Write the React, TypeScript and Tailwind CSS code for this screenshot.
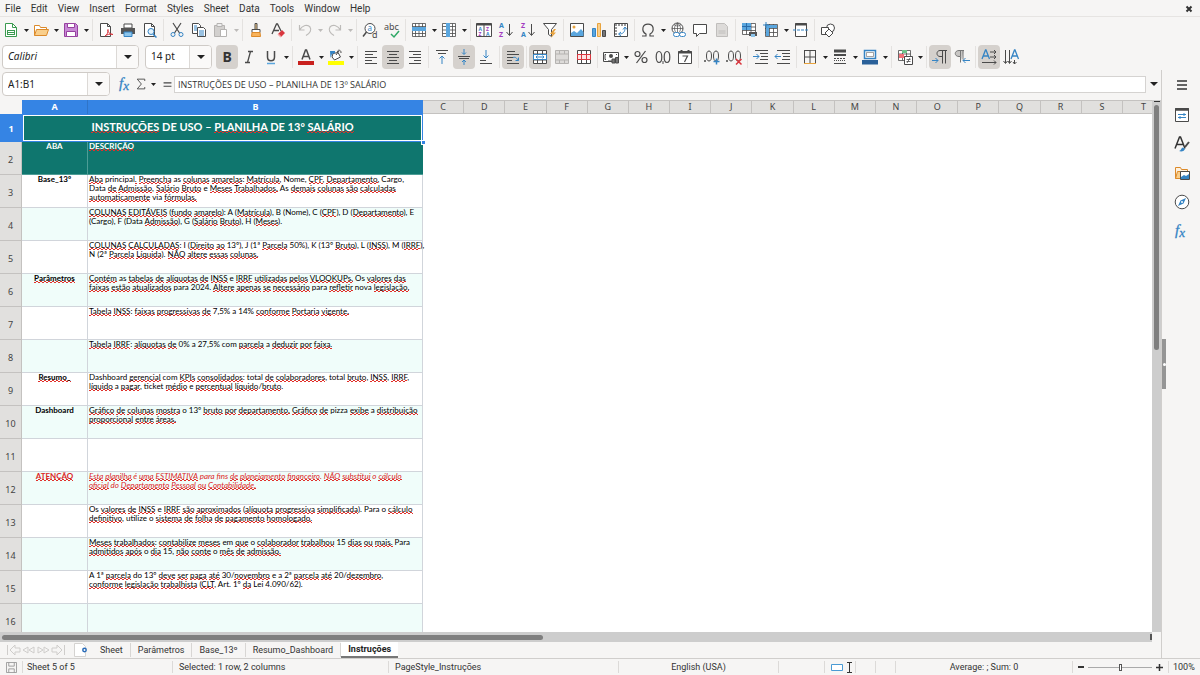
import type { ReactNode } from "react";
import { clsx } from "clsx";

const K = "#4a4a4a";
const B = "#3584c4";
const O = "#e8a33d";
const R = "#d9363e";

const icons: Record<string, ReactNode> = {
    "New": <><path d="M2.500 1.500h7l4 4v9h-11z" fill="#fff" stroke="#3a9a4f" /><path d="M9.500 1.500v4h4" fill="none" stroke="#3a9a4f" /><path d="M4 8h8v5H4z" fill="#3a9a4f" /><path d="M5 9.500h6M5 11.500h6" stroke="#fff" /></>,
    "Open": <><path d="M1.500 13.500v-10h5l1 2h6v2" fill="#fff" stroke="#dc8a2a" /><path d="M1.500 13.500l2-6h12l-2 6z" fill="#f9cf8c" stroke="#dc8a2a" /></>,
    "Save": <><path d="M1.500 1.500h11l2 2v11h-13z" fill="#c88ad6" stroke="#97419f" /><path d="M4.500 1.500h7v4h-7zM3.500 9.500h9v5h-9z" fill="#fff" stroke="#97419f" /></>,
    "Export as PDF": <><path d="M2.500 1.500h7l3 3v10h-10z" fill="#fff" stroke={K} /><path d="M9.500 1.500v3h3" fill="none" stroke={K} /><path d="M7 14c2-1 3.500-4 3-6.500-1 2 1.500 4.500 5 5-3-1-6 0-8 1.500z" fill="none" stroke={R} /></>,
    "Print": <><path d="M4 2h8v4H4z" fill="#fff" stroke={K} /><path d="M1 6h14v6H1z" fill="#555" /><path d="M4 10h8v4.500H4z" fill="#8cc4ea" stroke={B} /></>,
    "Print Preview": <><path d="M2.500 1.500h7l3 3v10h-10z" fill="#fff" stroke={K} /><path d="M9.500 1.500v3h3" fill="none" stroke={K} /><circle cx="9" cy="9.500" r="3" fill="#e4f2fb" stroke={B} /><path d="M11 12l3.500 3.500" stroke={B} strokeWidth="1.500" /></>,
    "Cut": <><path d="M4 1l6.500 10M12 1L5.500 11" stroke={K} strokeWidth="1.200" /><circle cx="4" cy="12.500" r="2" fill="none" stroke={B} /><circle cx="12" cy="12.500" r="2" fill="none" stroke={B} /></>,
    "Copy": <><path d="M1.500 1.500h6l2 2v8h-8z" fill="#fff" stroke={K} /><path d="M6.500 5.500h6l2 2v7h-8z" fill="#fff" stroke={K} /><path d="M3 4h3M3 6h3M3 8h3M8 9h5M8 11h5M8 13h5" stroke={B} /></>,
    "Paste": <><path d="M1.500 3.500h10v11h-10z" fill="#d2d0ce" stroke="#b5b3b1" /><path d="M4 1.500h5v3H4z" fill="#eee" stroke="#b5b3b1" /><path d="M7.500 7.500h6v7h-6z" fill="#fff" stroke="#b5b3b1" /></>,
    "Clone Formatting": <><path d="M7 1.500h2v6H7z" fill="#f9cf8c" stroke={K} /><path d="M4 7.500h8v3H4z" fill="#fff" stroke={K} /><path d="M4 10.500h8l.500 4h-9z" fill="#f9b35b" stroke="#dc8a2a" /></>,
    "Clear Formatting": <><path d="M2 12L6.500 2h1L11 9M4 8.500h5" fill="none" stroke={K} strokeWidth="1.300" /><path d="M8 12l4-4 3 3-4 4z" fill={R} /><path d="M7.500 12.500l1-1 3 3-1 1z" fill="#f4a6a8" /></>,
    "Undo": <path d="M2.500 3v5h5M2.500 8c3-5 8-6 10.500-3 2 3 0 6-4 8.500" fill="none" stroke="#bdbbb9" strokeWidth="1.200" />,
    "Redo": <path d="M13.500 3v5h-5M13.500 8c-3-5-8-6-10.500-3-2 3 0 6 4 8.500" fill="none" stroke="#bdbbb9" strokeWidth="1.200" />,
    "Find and Replace": <><circle cx="8" cy="6.500" r="5" fill="#fff" stroke={K} /><path d="M4.500 10L1 14.500" stroke={K} strokeWidth="1.500" /><text x="5.500" y="9" fontSize="8" fill={B}>a</text><text x="10" y="15.500" fontSize="9" fill={K}>d</text></>,
    "Spelling": <><text x="0" y="8" fontSize="9" fill={K}>abc</text><path d="M7 12l3 3 5-6" fill="none" stroke="#2fa866" strokeWidth="1.500" /></>,
    "Row": <><path d="M1.500 1.500h13v13h-13zM1.500 11.500h13M1.500 4.500h13M4.500 1.500v13M8 1.500v13M11.500 1.500v13" fill="#fff" stroke={K} strokeWidth=".800" /><path d="M1 5h14v4H1z" fill="#5aa6de" /></>,
    "Column": <><path d="M1.500 1.500h13v13h-13zM1.500 4.500h13M1.500 8h13M1.500 11.500h13M11.500 1.500v13" fill="#fff" stroke={K} strokeWidth=".800" /><path d="M5 1h4v14H5z" fill="#5aa6de" /></>,
    "Sort": <><path d="M.500 1.500h15v13H.500zM8 1.500v13" fill="#fff" stroke={K} /><path d="M.500 2.500h15" stroke={K} strokeWidth="2" /><g fontSize="5" fontWeight="700"><text x="2.500" y="8.500" fill={B}>A</text><text x="2.500" y="14" fill="#a23ac0">Z</text><text x="10" y="8.500" fill="#a23ac0">Z</text><text x="10" y="14" fill={B}>A</text></g></>,
    "Sort Ascending": <><text x="1" y="6" fontSize="7" fontWeight="700" fill={B}>A</text><text x="1" y="15" fontSize="7" fontWeight="700" fill="#a23ac0">Z</text><path d="M11.500 2v11M8.500 10l3 3.500 3-3.500" fill="none" stroke={K} /></>,
    "Sort Descending": <><text x="1" y="6" fontSize="7" fontWeight="700" fill="#a23ac0">Z</text><text x="1" y="15" fontSize="7" fontWeight="700" fill={B}>A</text><path d="M11.500 2v11M8.500 10l3 3.500 3-3.500" fill="none" stroke={K} /></>,
    "AutoFilter": <><path d="M1.500 1.500h13l-5 6v7l-3-2v-5z" fill="#fff" stroke={K} /><path d="M12 7l-4 5h2.500L9 16l5-5.500h-2.500L14 7z" fill={O} /></>,
    "Insert Image": <><path d="M1.500 1.500h13v13h-13z" fill="#fff" stroke={K} /><path d="M2 14V11l3-2 3 2 4-4 2.500 3v4z" fill="#5aa6de" /><circle cx="5" cy="5" r="1.500" fill={O} /></>,
    "Insert Chart": <><path d="M1.500 6.500h3v8h-3z" fill="#5aa6de" stroke={B} /><path d="M6.500 1.500h3v13h-3z" fill="#f9cf8c" stroke={O} /><path d="M11.500 8.500h3v6h-3z" fill="#777" stroke={K} /></>,
    "Pivot Table": <><path d="M1.500 1.500h13v13h-13z" fill="#fff" stroke={K} /><path d="M2 3h12M3 2v12" stroke="#999" strokeWidth="2" strokeDasharray="2 1" /><path d="M6 12c4 0 6-2 6-6M10 7.500L12 5l2 2.500M8 10l-2.500 2L8 14" fill="none" stroke={B} /></>,
    "Special Character": <path d="M2 14h4v-2C3 10.500 2.500 8 3 5.500 4 1 12 1 13 5.500c.500 2.500 0 5-3 6.500v2h4" fill="none" stroke={K} strokeWidth="1.200" />,
    "Insert Hyperlink": <><circle cx="7.500" cy="6.500" r="5.500" fill="#fff" stroke={K} /><path d="M2 6.500h11M7.500 1v11M4 2.500c3 2 4 2 7 0M7.500 1c-4 3-4 8 0 11M7.500 1c4 3 4 8 0 11" fill="none" stroke={K} strokeWidth=".700" /><rect x="3.500" y="10.500" width="6" height="4" rx="2" fill="#fff" stroke={B} /><rect x="9.500" y="10.500" width="6" height="4" rx="2" fill="#fff" stroke={B} /></>,
    "Insert Comment": <path d="M1.500 2.500h13v9H7.500l-3 3v-3h-3z" fill="#fff" stroke={K} />,
    "Headers and Footers": <><path d="M2.500 1.500h8l3 3v10h-11z" fill="#dddbd9" stroke="#c0bebc" /><path d="M4.500 9h7M4.500 11h7" stroke="#c0bebc" /></>,
    "Define Print Area": <><path d="M1.500 1.500h13v11h-13zM1.500 5h13M1.500 8.500h13M5.500 1.500v11M10 1.500v11" fill="#fff" stroke={K} strokeWidth=".800" /><path d="M1 1h9v7H1z" fill="#5aa6de" /><path d="M1 4.500h9M5.500 1v7" stroke="#2a6ca8" /><path d="M8 10h8v4H8z" fill="#555" /><path d="M10 12h4v3h-4z" fill="#8cc4ea" /></>,
    "Freeze Rows and Columns": <><path d="M2.500 2.500h12v12h-12zM6.500 2v12M10.500 2v12M2 6.500h12M2 10.500h12" fill="#fff" stroke={K} strokeWidth=".800" /><path d="M3 3h11v3H3zM3 3h3v11H3z" fill="#5aa6de" /><path d="M3 0v6M0 3h6" stroke={B} /></>,
    "Split Window": <><path d="M2.500 1.500h11v13h-11z" fill="#fff" stroke={K} /><path d="M2 2.500h12" stroke={K} strokeWidth="2" /><path d="M0 8h16" stroke={B} strokeDasharray="3 1" /></>,
    "Show Draw Functions": <><circle cx="10.500" cy="6" r="4" fill="#fff" stroke={K} /><path d="M1.500 5.500h7v7h-7z" fill="#fff" stroke={K} /><path d="M9 7l4 4-4 4-4-4z" fill="#fff" stroke={K} /></>,
    "Bold": <text x="3.500" y="13" fontSize="14" fontWeight="700" fill="#333">B</text>,
    "Italic": <path d="M7 2.500h5M4 13.500h5M9.500 2.500l-3 11" fill="none" stroke={K} strokeWidth="1.300" />,
    "Underline": <><path d="M4.500 2v6c0 5 7 5 7 0V2" fill="none" stroke={K} strokeWidth="1.500" /><path d="M4 14.500h8" stroke="#5aa6de" strokeWidth="1.500" /></>,
    "Font Color": <><path d="M4 10.500L7.500 1h1L12 10.500M5.300 7.500h5.500" fill="none" stroke={K} strokeWidth="1.500" /><path d="M0 12h16v4H0z" fill="#c9211e" /></>,
    "Background Color": <><path d="M5 4.500l5-1 2.500 4.500-6 3-2.500-3z" fill="#fff" stroke={K} /><path d="M2 2h5v2L4 5 2.500 9z" fill={B} /><path d="M9.500 3c0-3 4-2 3.500 1M11 2l-3 4" fill="none" stroke={K} /><path d="M0 12h16v4H0z" fill="#ff0" /></>,
    "Align Left": <path d="M2 2.500h12M2 5.500h8M2 8.500h12M2 11.500h7M2 14.500h12" stroke={K} />,
    "Align Center": <path d="M2 2.500h12M4 5.500h8M2 8.500h12M4 11.500h8M2 14.500h12" stroke={K} />,
    "Align Right": <path d="M2 2.500h12M6 5.500h8M2 8.500h12M7 11.500h7M2 14.500h12" stroke={K} />,
    "Align Top": <><path d="M2 1.500h12M4 4.500h8" stroke={K} /><path d="M8 15V7M5.500 9.500L8 7l2.500 2.500" fill="none" stroke={B} /></>,
    "Center Vertically": <><path d="M2 7.500h12M3 9.500h10" stroke={K} /><path d="M8 0v5M6 3.500l2 2 2-2M8 16v-5M6 13l2-2 2 2" fill="none" stroke={B} /></>,
    "Align Bottom": <><path d="M2 11.500h6M2 14.500h12" stroke={K} /><path d="M8 1v8M5.500 6.500L8 9l2.500-2.500" fill="none" stroke={B} /></>,
    "Wrap Text": <><path d="M2 2.500h8M2 5.500h12M2 8.500h6M2 11.500h5M2 14.500h12" stroke={K} /><path d="M8 8.500c3-1 4 1 5 3M10.500 11.500h3v-3" fill="none" stroke={B} /></>,
    "Merge and Center Cells": <><path d="M1.500 1.500h13v13h-13zM1.500 5h13M1.500 11h13M5.500 1.500V5M10.500 1.500V5M5.500 11v3.500M10.500 11v3.500" fill="#fff" stroke={K} /><path d="M1.500 5.500h13v5h-13z" fill="#fff" stroke={B} /><path d="M4 8h8M5.500 6.500L4 8l1.500 1.500M10.500 6.500L12 8l-1.500 1.500" fill="none" stroke={B} /></>,
    "Merge Cells": <path d="M1.500 1.500h13v13h-13zM1.500 5h13M1.500 11h13M5.500 1.500V5M10.500 1.500V5M5.500 11v3.500M10.500 11v3.500" fill="#dddbd9" stroke="#b5b3b1" />,
    "Unmerge Cells": <><path d="M1.500 1.500h13v13h-13zM5.500 1.500v13M10.500 1.500v13" fill="#fff" stroke={K} /><path d="M1.500 5.500h13v5h-13zM5.500 5.500v5M10.500 5.500v5" fill="#fbe3e3" stroke={R} /></>,
    "Format as Currency": <><path d="M.500 3.500h15v9H.500z" fill="#fff" stroke={K} /><path d="M3 5.500H2v5h1M13 5.500h1" fill="none" stroke={K} /><circle cx="8" cy="7" r="2" fill={K} /><path d="M5 12h4M9 10h3v4H9zM12.500 8.500h3V14h-3z" fill="#777" stroke={K} /></>,
    "Format as Percent": <><circle cx="4.500" cy="5" r="2.500" fill="none" stroke={K} strokeWidth="1.200" /><circle cx="11.500" cy="11" r="2.500" fill="none" stroke={K} strokeWidth="1.200" /><path d="M12.500 2l-9 12" stroke={K} strokeWidth="1.200" /></>,
    "Format as Number": <><ellipse cx="4" cy="8" rx="2.800" ry="5.500" fill="none" stroke={K} strokeWidth="1.200" /><ellipse cx="12" cy="8" rx="2.800" ry="5.500" fill="none" stroke={K} strokeWidth="1.200" /><path d="M8 12v3" stroke={K} /></>,
    "Format as Date": <><path d="M1.500 2.500h13v12h-13z" fill="#fff" stroke={K} /><path d="M1 3.500h14M4.500 1v3M11.500 1v3" stroke={K} strokeWidth="2" /><path d="M5.500 7h5l-3 6" fill="none" stroke={K} strokeWidth="1.200" /></>,
    "Add Decimal Place": <><ellipse cx="5" cy="7" rx="2.500" ry="5" fill="none" stroke={K} /><ellipse cx="12" cy="7" rx="2.500" ry="5" fill="none" stroke={K} /><path d="M1 11v2" stroke={K} strokeWidth="1.500" /><path d="M12.500 9.500v6M9.500 12.500h6" stroke={B} strokeWidth="1.500" /></>,
    "Delete Decimal Place": <><ellipse cx="5" cy="7" rx="2.500" ry="5" fill="none" stroke={K} /><ellipse cx="12" cy="7" rx="2.500" ry="5" fill="none" stroke={K} /><path d="M1 11v2" stroke={K} strokeWidth="1.500" /><path d="M10 10l5.500 5.500M15.500 10L10 15.500" stroke={R} strokeWidth="1.500" /></>,
    "Increase Indent": <><path d="M2 1.500h13M7 4.500h8M8 7.500h7M7 10.500h8M2 14.500h13" stroke={K} /><path d="M0 7.500h6M3.500 5L6 7.500 3.500 10" fill="none" stroke={B} /></>,
    "Decrease Indent": <><path d="M2 1.500h13M7 4.500h8M8 7.500h7M7 10.500h8M2 14.500h13" stroke={K} /><path d="M0 7.500h6M2.500 5L0 7.500 2.500 10" fill="none" stroke={B} /></>,
    "Borders": <><path d="M2 1.500h12M2 8h12M2.500 1v13M8 1v13M13.500 1v13" stroke={K} /><path d="M2 14.500h12" stroke={O} /></>,
    "Border Style": <><path d="M2 2h12" stroke={K} strokeWidth="3" /><path d="M2 6h12" stroke={K} strokeWidth="2" /><path d="M2 9.500h12" stroke={K} strokeDasharray="2 1" /><path d="M2 11.500h12" stroke={K} strokeDasharray="1 1" /><path d="M2 14.500h12" stroke={K} /></>,
    "Border Color": <><path d="M2.500 1.500h11v8h-11z" fill="#fff" stroke={B} strokeWidth="1.500" /><path d="M4.500 3.500h7v4h-7z" fill="#fff" stroke={K} strokeWidth=".500" /><path d="M0 11h16v4.500H0z" fill="#2a6099" /></>,
    "Conditional": <><path d="M1.500 1.500h12v10h-12zM1.500 5h12M1.500 8h12M5.500 1.500v10M9.500 1.500v10" fill="#fff" stroke={K} strokeWidth=".800" /><path d="M5 1h5v3H5z" fill="#6cc48a" /><path d="M2 5h5v4H2z" fill="#f07178" /><path d="M7.500 7.500h8v8h-8z" fill="#fff" stroke={K} /><path d="M9.500 10.500h4M9.500 12.500h4M13 9l-3 5" stroke={K} strokeWidth=".800" /></>,
    "Left-To-Right": <><path d="M10.500 1.500v13M13.500 1.500v13M15 1.500H8c-4 0-4 6 0 6h2" fill="none" stroke={K} /><path d="M0 11.500h6M3.500 9L6 11.500 3.500 14" fill="none" stroke={B} /></>,
    "Right-To-Left": <><path d="M10 1.500H5c-5 0-5 6 0 6h1.500v6M9 1.500v9M6.500 1.500v6" fill="#c8c6c4" stroke="#777" /><path d="M9 11.500h7M11.500 9L9 11.500l2.500 2.500" fill="none" stroke={B} /></>,
    "Text direction from left to right": <><path d="M1 10L4.500 1h.500L8.500 10M2.200 7h5.200" fill="none" stroke={B} strokeWidth="1.300" /><path d="M9 3h6M9 8h6M1 13.500h14M13 1l2 2-2 2M13 6l2 2-2 2M13 11.500l2 2-2 2" fill="none" stroke={K} /></>,
    "Text direction from top to bottom": <><path d="M8 10L11.500 1h.500L15.500 10M9.200 7h5.200" fill="none" stroke={B} strokeWidth="1.300" /><path d="M2.500 1v13M6.500 1v13M11.500 11v4M.500 12l2 2.500 2-2.500M5 12l1.500 2.500L8.500 12M10 13l1.500 2 2-2" fill="none" stroke={K} /></>,
    "Function Wizard": <text x="1" y="12" fontSize="15" fontStyle="italic" fontFamily="Liberation Serif, serif" fill={B} stroke={B} strokeWidth=".300">f<tspan fontSize="13" dy="2">x</tspan></text>,
    "Select Function": <path d="M13 4V1.500H3L8.500 8 3 14.500h10V12" fill="none" stroke={K} strokeWidth="1.200" />,
    "Formula": <path d="M1 5h14M1 11h14" stroke="#444" strokeWidth="2" />,
    "Sidebar Settings": <path d="M3 4h10M3 8h10M3 12h10" stroke="#333" strokeWidth="1.500" />,
    "Properties": <><path d="M1.500 1.500h13v13h-13z" fill="#fff" stroke={K} /><path d="M1 2.500h14" stroke={K} strokeWidth="2.500" /><path d="M4 7.500h8M4 10.500h8M10 6v3M6 9v3" stroke={B} /></>,
    "Styles": <><path d="M1 12.500L5.500 1h1L11 12.500M2.500 8.500h7" fill="none" stroke="#333" strokeWidth="1.500" /><path d="M15 6l-4 5" stroke={K} strokeWidth="2" /><path d="M5 15c2 0 2-3 4-3.500l2 1.500c-1 2.500-4 3-6 2z" fill={B} /></>,
    "Gallery": <><path d="M1.500 13.500v-11h5l1 2h6v3" fill="#fdf1df" stroke="#dc8a2a" /><path d="M1.500 13.500l2-7h12l-1 7z" fill="#f9cf8c" stroke="#dc8a2a" /><path d="M6.500 6.500h9v8h-9z" fill="#fff" stroke={K} /><path d="M7 14v-2l3-2 2 1 3-2v5z" fill={B} /></>,
    "Navigator": <><circle cx="8" cy="8" r="6.800" fill="#fff" stroke={K} /><path d="M12 4l-2.500 5.500L4 12l2.500-5.500z" fill={B} /><circle cx="8" cy="8" r="1" fill="#fff" /></>,
    "Close": <path d="M5.500 5.500l5 5M10.500 5.500l-5 5" stroke="#333" strokeWidth="2" />,
};

type Tool = { name: string; menu?: boolean; on?: boolean };

const tool = (name: string, menu = false, on = false): Tool => ({ name, menu, on });

const standardBar: Tool[][] = [
    [tool("New", true), tool("Open", true), tool("Save", true)],
    [tool("Export as PDF"), tool("Print"), tool("Print Preview")],
    [tool("Cut"), tool("Copy"), tool("Paste", true)],
    [tool("Clone Formatting"), tool("Clear Formatting")],
    [tool("Undo", true), tool("Redo", true)],
    [tool("Find and Replace"), tool("Spelling")],
    [tool("Row", true), tool("Column", true)],
    [tool("Sort"), tool("Sort Ascending"), tool("Sort Descending"), tool("AutoFilter")],
    [tool("Insert Image"), tool("Insert Chart"), tool("Pivot Table")],
    [tool("Special Character", true), tool("Insert Hyperlink"), tool("Insert Comment"), tool("Headers and Footers")],
    [tool("Define Print Area"), tool("Freeze Rows and Columns", true), tool("Split Window")],
    [tool("Show Draw Functions")],
];

const formatBar: Tool[][] = [
    [tool("Bold", false, true), tool("Italic"), tool("Underline", true)],
    [tool("Font Color", true), tool("Background Color", true)],
    [tool("Align Left"), tool("Align Center", false, true), tool("Align Right")],
    [tool("Align Top"), tool("Center Vertically", false, true), tool("Align Bottom")],
    [tool("Wrap Text", false, true)],
    [tool("Merge and Center Cells", false, true), tool("Merge Cells"), tool("Unmerge Cells")],
    [tool("Format as Currency", true), tool("Format as Percent"), tool("Format as Number"), tool("Format as Date")],
    [tool("Add Decimal Place"), tool("Delete Decimal Place")],
    [tool("Increase Indent"), tool("Decrease Indent")],
    [tool("Borders", true), tool("Border Style", true), tool("Border Color", true)],
    [tool("Conditional", true)],
    [tool("Left-To-Right", false, true), tool("Right-To-Left")],
    [tool("Text direction from left to right", false, true), tool("Text direction from top to bottom")],
];

const disabled = ["Paste", "Undo", "Redo", "Headers and Footers", "Merge Cells"];
const menus = ["File", "Edit", "View", "Insert", "Format", "Styles", "Sheet", "Data", "Tools", "Window", "Help"];
const columns = "CDEFGHIJKLMNOPQRS".split("");
const sheets = ["Sheet", "Parâmetros", "Base_13º", "Resumo_Dashboard", "Instruções"];
const panels = ["Properties", "Styles", "Gallery", "Navigator", "Function Wizard"];

// words between square brackets get the spell check wave
const rows: { a?: string; b?: string[]; alert?: boolean }[] = [
    { a: "Base_13º", b: ["[Aba] principal[.] [Preencha] as [colunas] [amarelas]: [Matrícula], Nome, [CPF], [Departamento], Cargo,", "Data [de] [Admissão], [Salário] [Bruto] e [Meses] [Trabalhados.] As [demais] [colunas] [são] [calculadas]", "[automaticamente] via [fórmulas.]"] },
    { b: ["[COLUNAS] [EDITÁVEIS] ([fundo] [amarelo]): A ([Matrícula]), B (Nome), C ([CPF]), D ([Departamento]), E", "(Cargo), F (Data [Admissão]), G ([Salário] [Bruto]), H ([Meses])."] },
    { b: ["[COLUNAS] [CALCULADAS]: I ([Direito] [ao] 13º), J (1ª [Parcela] 50%), K (13º [Bruto]), L ([INSS]), M ([IRRF]),", "N (2ª [Parcela] [Líquida]). [NÃO] [altere] [essas] [colunas.]"] },
    { a: "[Parâmetros]", b: ["[Contém] as [tabelas] [de] [alíquotas] [de] [INSS] e [IRRF] [utilizadas] [pelos] [VLOOKUPs.] Os [valores] [das]", "[faixas] [estão] [atualizados] para 2024. [Altere] [apenas] [se] [necessário] para [refletir] nova [legislação.]"] },
    { b: ["[Tabela] [INSS]: [faixas] [progressivas] [de] 7,5% a 14% [conforme] [Portaria] [vigente.]"] },
    { b: ["[Tabela] [IRRF]: [alíquotas] [de] 0% a 27,5% com [parcela] a [deduzir] [por] [faixa.]"] },
    { a: "[Resumo_]", b: ["Dashboard [gerencial] com [KPIs] [consolidados]: total [de] [colaboradores], total [bruto], [INSS], [IRRF],", "[líquido] a [pagar], ticket [médio] e [percentual] [líquido]/[bruto]."] },
    { a: "Dashboard", b: ["[Gráfico] [de] [colunas] [mostra] o 13º [bruto] [por] [departamento.] [Gráfico] [de] pizza [exibe] a [distribuição]", "[proporcional] [entre] [áreas.]"] },
    {},
    { a: "[ATENÇÃO]", alert: true, b: ["[Esta] [planilha] é [uma] [ESTIMATIVA] para fins [de] [planejamento] [financeiro]. [NÃO] [substitui] o [cálculo]", "[oficial] do [Departamento] [Pessoal] [ou] [Contabilidade.]"] },
    { b: ["Os [valores] [de] [INSS] e [IRRF] [são] [aproximados] ([alíquota] [progressiva] [simplificada]). Para o [cálculo]", "[definitivo], utilize o [sistema] [de] [folha] [de] [pagamento] [homologado.]"] },
    { b: ["[Meses] [trabalhados]: [contabilize] [meses] em [que] o [colaborador] [trabalhou] 15 [dias] [ou] [mais.] Para", "[admitidos] [após] o [dia] 15, [não] [conte] o [mês] [de] [admissão.]"] },
    { b: ["A 1ª [parcela] do 13º [deve] [ser] [paga] [até] 30/[novembro] e a 2ª [parcela] [até] 20/[dezembro],", "[conforme] [legislação] [trabalhista] ([CLT], Art. 1º [da] Lei 4.090/62)."] },
    {},
];

function Icon({ name }: { name: string }) {
    return (
        <svg viewBox="0 0 16 16" className="size-4 overflow-visible" aria-hidden="true">
            {icons[name]}
        </svg>
    );
}

function Caret() {
    return (
        <svg viewBox="0 0 8 4" className="shrink-0 fill-[#222]" width="8" height="4" aria-hidden="true">
            <path d="M0 0h8L4 4z" />
        </svg>
    );
}

function Separator() {
    return <div className="mx-[2px] h-[22px] w-px shrink-0 bg-[#e4e2e0]" />;
}

function ToolGroups({ groups }: { groups: Tool[][] }) {
    return groups.map((group, i) => (
        <div key={i} className="flex items-center">
            {i > 0 && <Separator />}
            {group.map(({ name, menu, on }) => (
                <div key={name} className="flex items-center">
                    <button
                        aria-label={name}
                        aria-pressed={on}
                        className={clsx("flex h-6 w-[22px] items-center justify-center rounded", on && "bg-[#d5d1cd]")}
                    >
                        <Icon name={name} />
                    </button>
                    {menu && (
                        <button aria-label={`${name} options`} className="flex h-6 w-2 items-center justify-center pt-px">
                            <svg viewBox="0 0 5 3" width="5" height="3" className={disabled.includes(name) ? "fill-[#bdbbb9]" : "fill-[#222]"}>
                                <path d="M0 0h5L2.500 3z" />
                            </svg>
                        </button>
                    )}
                </div>
            ))}
        </div>
    ));
}

function Combo({ label, value, className }: { label: string; value: string; className: string }) {
    return (
        <div className="flex h-6 shrink-0 overflow-hidden rounded border border-[#cfcbc7] bg-white">
            <input aria-label={label} defaultValue={value} className={clsx("px-[5px] text-[10px] text-[#222] outline-none", className)} />
            <button aria-label={`${label} list`} className="flex w-[22px] items-center justify-center border-l border-[#dcd9d6] bg-[#faf9f8]">
                <Caret />
            </button>
        </div>
    );
}

// two offset rows of dashes read as a small zigzag below the word
const wave =
    "bg-[repeating-linear-gradient(90deg,#e0302a_0_2px,transparent_2px_4px),repeating-linear-gradient(90deg,transparent_0_2px,#e0302a_2px_4px)] bg-[length:100%_1px,100%_1px] bg-[position:0_100%,0_calc(100%-1px)] bg-no-repeat";

function Spell({ text }: { text: string }) {
    return text.split(/(\[[^\]]+\])/).map((part, i) =>
        part.startsWith("[") ? <span key={i} className={wave}>{part.slice(1, -1)}</span> : part
    );
}

function SheetTable() {
    const rowHeader = "border-b border-r border-[#c4c2c0] bg-[#e1e0de] p-0 pt-[2px] text-center align-middle font-['Noto_Sans'] text-[9px] font-normal text-[#444]";
    return (
        <table className="w-full table-fixed border-separate border-spacing-0 font-['Lato',sans-serif] text-[8px] leading-[9px] text-black">
            <colgroup>
                <col className="w-[22px]" />
                <col className="w-[66px]" />
                <col className="w-[335px]" />
                {columns.map((c) => <col key={c} />)}
                <col className="w-[29px]" />
            </colgroup>
            <thead>
                <tr className="h-[14px] font-['Noto_Sans'] text-[9px] leading-3 text-[#444]">
                    <td className="bg-[#f6f5f4] p-0" />
                    <th scope="col" className="border-r border-[#2f74c8] bg-[#3584e4] p-0 text-white">A</th>
                    <th scope="col" className="bg-[#3584e4] p-0 text-white">B</th>
                    {columns.map((c) => (
                        <th key={c} scope="col" className="border-y border-r border-[#c4c2c0] bg-[#e1e0de] p-0 font-normal">{c}</th>
                    ))}
                    <th scope="col" className="border-y border-[#c4c2c0] bg-[#e1e0de] p-0 pr-[6px] text-right font-normal">T</th>
                </tr>
            </thead>
            <tbody>
                <tr className="h-7">
                    <th scope="row" className="bg-[#3584e4] p-0 font-['Noto_Sans'] text-[9px] text-white">1</th>
                    <td colSpan={2} className="relative bg-[#0f766e] p-0 pb-[2px] text-center text-[11px] font-bold leading-4 text-white outline-1 -outline-offset-2 outline-white ring-1 ring-[#3584e4] ring-inset">
                        <Spell text="[INSTRUÇÕES] DE USO – [PLANILHA] DE 13º [SALÁRIO]" />
                        <span className="absolute -bottom-[3px] -right-[3px] z-10 size-[5px] border border-white bg-[#3584e4]" />
                    </td>
                    <td colSpan={18} className="bg-white" />
                </tr>
                <tr className="h-[33px]">
                    <th scope="row" className={rowHeader}>2</th>
                    <td className="border-b border-r border-[#4d9d96] bg-[#0f766e] p-0 text-center align-top font-bold text-white">ABA</td>
                    <td className="border-b border-[#4d9d96] bg-[#0f766e] px-px py-0 align-top font-bold text-white"><Spell text="[DESCRIÇÃO]" /></td>
                    <td colSpan={18} className="bg-white" />
                </tr>
                {rows.map((row, i) => (
                    <tr key={i} className={clsx("h-[33px]", i % 2 ? "bg-[#f0fdfa]" : "bg-white", row.alert && "text-[#dc2626]")}>
                        <th scope="row" className={rowHeader}>{i + 3}</th>
                        <td className="border-b border-r border-[#d1d5db] p-0 text-center align-top font-bold">
                            {row.a && <Spell text={row.a} />}
                        </td>
                        <td className={clsx("border-b border-r border-[#d1d5db] px-px py-0 align-top whitespace-nowrap", row.alert && "italic")}>
                            {row.b?.map((line) => <div key={line}><Spell text={line} /></div>)}
                        </td>
                        <td colSpan={18} className="bg-white" />
                    </tr>
                ))}
            </tbody>
        </table>
    );
}

function SheetTabs() {
    return (
        <div className="flex h-4 shrink-0 items-stretch font-['Roboto'] text-[9px] leading-[14px] text-[#333]">
            <div className="flex w-[68px] items-center pl-[6px]">
                {["First", "Previous", "Next", "Last"].map((name, i) => (
                    <button key={name} aria-label={`${name} sheet`} className="w-[15px]">
                        <svg viewBox="0 0 15 12" width="15" height="12" className="fill-[#f6f5f4] stroke-[#cfcdcb]">
                            {i === 0 && <path d="M1.500 1v10M9 1L4 6l5 5V8h5V4H9z" />}
                            {i === 1 && <path d="M7 3L2 6l5 3zM13 3L8 6l5 3z" />}
                            {i === 2 && <path d="M2 3l5 3-5 3zM8 3l5 3-5 3z" />}
                            {i === 3 && <path d="M13.500 1v10M6 1l5 5-5 5V8H1V4h5z" />}
                        </svg>
                    </button>
                ))}
            </div>
            <button aria-label="Add Sheet" className="ml-[6px] mr-1 w-[15px]">
                <svg viewBox="0 0 15 14" width="15" height="14">
                    <path d="M.500.500h8l3 3v10H.500z" fill="#fff" stroke="#d5d3d1" />
                    <circle cx="10.500" cy="7" r="1.700" fill="#fff" stroke="#2a6cb8" strokeWidth="1.500" />
                </svg>
            </button>
            {sheets.map((name, i) => (
                <button
                    key={name}
                    className={clsx(
                        i === sheets.length - 1
                            ? "border-b-2 border-[#777] bg-white px-[7px] font-bold text-[#222]"
                            : "my-px border-r border-[#d8d6d4] px-[7px]"
                    )}
                >
                    {name}
                </button>
            ))}
        </div>
    );
}

function StatusBar() {
    const cell = "flex h-3 items-center border-l border-[#dcdad8]";
    return (
        <footer className="flex h-[17px] shrink-0 items-center border-t border-[#d0cecc] font-['Roboto'] text-[9px] leading-4 text-[#333]">
            <div className="flex w-[22px] justify-center">
                <svg viewBox="0 0 12 12" width="11" height="11" fill="none" className="stroke-[#999]">
                    <path d="M.500.500h11v11H.500zM3 .500v4h6v-4M3 11.500v-4h6v4" />
                </svg>
            </div>
            <div className={clsx(cell, "w-[150px] pl-1")}>Sheet 5 of 5</div>
            <div className={clsx(cell, "w-[216px] pl-[6px]")}>Selected: 1 row, 2 columns</div>
            <div className={clsx(cell, "w-[230px] pl-[6px]")}>PageStyle_Instruções</div>
            <div className={clsx(cell, "flex-1 justify-center")}>English (USA)</div>
            <div className={clsx(cell, "w-[46px]")} />
            <div className={clsx(cell, "w-[31px] gap-1 pl-[6px]")}>
                <svg viewBox="0 0 12 7" width="12" height="7"><path d="M.500.500h11v6H.500z" fill="#fff" stroke="#4a9bd4" /></svg>
                <svg viewBox="0 0 5 11" width="5" height="11"><path d="M0 .500h5M0 10.500h5M2.500 0v11" stroke="#333" /></svg>
            </div>
            <div className={clsx(cell, "w-5")} />
            <div className={clsx(cell, "w-5")} />
            <div className={clsx(cell, "w-[177px] justify-center")}>Average: ; Sum: 0</div>
            <div className={clsx(cell, "w-24 justify-center gap-1")}>
                <button aria-label="Zoom out" className="h-[2px] w-[6px] bg-[#333]" />
                <input
                    type="range"
                    aria-label="Zoom"
                    className="h-[10px] w-16 appearance-none bg-[linear-gradient(#aaa,#aaa)] bg-[length:100%_1px] bg-center bg-no-repeat [&::-webkit-slider-thumb]:h-[7px] [&::-webkit-slider-thumb]:w-[3px] [&::-webkit-slider-thumb]:appearance-none [&::-webkit-slider-thumb]:border [&::-webkit-slider-thumb]:border-[#555] [&::-webkit-slider-thumb]:bg-white"
                />
                <button aria-label="Zoom in">
                    <svg viewBox="0 0 7 7" width="7" height="7"><path d="M0 3.500h7M3.500 0v7" stroke="#333" strokeWidth="1.500" /></svg>
                </button>
            </div>
            <div className={clsx(cell, "w-8 pl-1")}>100%</div>
        </footer>
    );
}

export default function App() {
    return (
        <div className="flex h-screen flex-col overflow-hidden bg-[#f6f5f4] font-['Noto_Sans',sans-serif] text-[#333]">
            <nav className="flex h-[17px] shrink-0 items-center border-b border-[#e6e4e2] pt-px font-['Roboto'] text-[10px] leading-4">
                {menus.map((item) => <button key={item} className="px-[5px]">{item}</button>)}
                <button aria-label="Close" className="ml-auto mr-[3px]"><Icon name="Close" /></button>
            </nav>
            <div className="flex h-[26px] shrink-0 items-center">
                <ToolGroups groups={standardBar} />
            </div>
            <div className="flex h-[27px] shrink-0 items-center pl-[2px]">
                <Combo label="Font Name" value="Calibri" className="w-[113px] italic" />
                <div className="w-[6px]" />
                <Combo label="Font Size" value="14 pt" className="w-[43px]" />
                <div className="w-1" />
                <ToolGroups groups={formatBar} />
            </div>

            <div className="flex min-h-0 flex-1">
                <main className="flex min-w-0 flex-1 flex-col">
                    <div className="flex h-[30px] shrink-0 items-center pb-[2px] pl-[2px]">
                        <Combo label="Name Box" value="A1:B1" className="w-[84px]" />
                        <div className="w-2" />
                        <button aria-label="Function Wizard" className="mr-px"><Icon name="Function Wizard" /></button>
                        <button aria-label="Select Function" className="flex items-center gap-1">
                            <svg viewBox="0 0 16 16" className="size-3">{icons["Select Function"]}</svg>
                            <svg viewBox="0 0 5 3" width="5" height="3" className="fill-[#222]"><path d="M0 0h5L2.500 3z" /></svg>
                        </button>
                        <button aria-label="Formula" className="ml-1 flex h-4 w-[14px] items-center justify-center">
                            <svg viewBox="0 0 16 16" className="size-[9px]">{icons["Formula"]}</svg>
                        </button>
                        <input
                            aria-label="Input line"
                            defaultValue="INSTRUÇÕES DE USO – PLANILHA DE 13º SALÁRIO"
                            className="h-[17px] min-w-0 flex-1 border border-[#d5d3d1] bg-white px-[3px] font-['Open_Sans'] text-[9px] outline-none"
                        />
                        <button aria-label="Expand Formula Bar" className="flex w-[15px] justify-center"><Caret /></button>
                    </div>
                    <div className="flex min-h-0 flex-1">
                        <div className="min-w-0 flex-1 overflow-hidden bg-white">
                            <SheetTable />
                        </div>
                        <div className="flex w-[9px] flex-col items-center bg-[#cdcdcd]">
                            <div className="mt-px h-px w-[6px] bg-[#333]" />
                            <div className="mt-[3px] h-[46%] w-[5px] rounded-full bg-[#7f7f7f]" />
                        </div>
                    </div>
                    <div className="flex h-[10px] shrink-0 items-center pr-[9px]">
                        <div className="flex h-full flex-1 items-center bg-[#cdcdcd] pl-[2px]">
                            <div className="h-[5px] w-[47%] rounded-full bg-[#7f7f7f]" />
                            <div className="ml-auto h-[6px] w-[2px] bg-[#555]" />
                        </div>
                    </div>
                    <SheetTabs />
                </main>
                <aside className="flex w-[39px] shrink-0 border-l border-[#d0cecc]">
                    <div className="flex w-1 items-center">
                        <div className="flex h-[50px] w-1 items-center justify-center bg-[#959595]">
                            <div className="size-[3px] rounded-full bg-white" />
                        </div>
                    </div>
                    <div className="flex flex-1 flex-col items-center gap-[13px] pr-[2px] pt-[7px]">
                        <button aria-label="Sidebar Settings" className="mb-px"><Icon name="Sidebar Settings" /></button>
                        {panels.map((name) => <button key={name} aria-label={name}><Icon name={name} /></button>)}
                    </div>
                </aside>
            </div>
            <StatusBar />
        </div>
    );
}
